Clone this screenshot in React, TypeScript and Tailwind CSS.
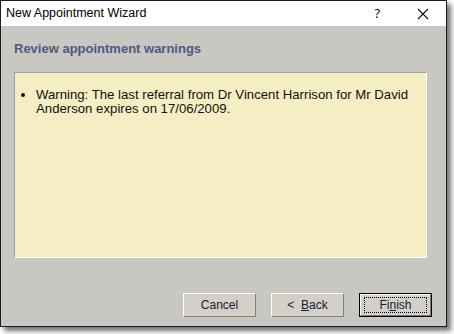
import React from 'react';

const Btn = ({ children, focused }: { children: React.ReactNode; focused?: boolean }) => (
  <div className={`w-[73px] h-[24px] ${focused ? 'border border-black' : ''}`}>
    <div className="w-full h-full bg-[#d4d0c8] border-t border-l border-t-white border-l-white border-b border-r border-b-[#808080] border-r-[#808080] flex items-center justify-center">
      <div className={`flex items-center justify-center ${focused ? 'w-[63px] h-[16px] border border-dotted border-black' : ''}`}>
        <span className="text-[12px] text-[#1a1a3a] leading-none">{children}</span>
      </div>
    </div>
  </div>
);

export default function App() {
  return (
    <div className="w-[454px] h-[334px] bg-white" style={{ fontFamily: '"Liberation Sans", Arial, sans-serif' }}>
      <div className="w-[447px] h-[327px] border border-[#1c1c1c] flex flex-col shadow-[4px_4px_5px_rgba(0,0,0,0.55)]">
        {/* title bar */}
        <div className="h-[25px] bg-white flex items-center shrink-0">
          <span className="pl-[5px] text-[12.5px] text-black">New Appointment Wizard</span>
          <span className="ml-auto text-[13px] text-black mr-[37px]" style={{ fontFamily: '"Open Sans", sans-serif' }}>?</span>
          <svg width="12" height="12" viewBox="0 0 12 12" className="mr-[17px]">
            <path d="M1 1L11 11M11 1L1 11" stroke="#111" strokeWidth="1.1" />
          </svg>
        </div>
        {/* body */}
        <div className="flex-1 bg-[#c8c7c2] flex flex-col px-[13px]">
          <h1 className="pt-[13px] h-[46px] text-[13px] font-bold text-[#4d5a7c]">
            Review appointment warnings
          </h1>
          <div className="w-[413px] h-[186px] bg-[#f6eec3] border-t border-l border-t-[#a0a0a0] border-l-[#a0a0a0] border-b border-r border-b-white border-r-white pl-[11px] pt-[15px]">
            <ul className="list-disc pl-[10px] text-[13.2px] leading-[14px] text-[#111]">
              <li className="pr-[6px]">Warning: The last referral from Dr Vincent Harrison for Mr David Anderson expires on 17/06/2009.</li>
            </ul>
          </div>
          <div className="flex justify-end gap-[15px] mt-[35px] mr-[1px]">
            <Btn>Cancel</Btn>
            <Btn>&lt;&nbsp; <span className="underline">B</span>ack</Btn>
            <Btn focused>Fi<span className="underline">n</span>ish</Btn>
          </div>
        </div>
      </div>
    </div>
  );
}
